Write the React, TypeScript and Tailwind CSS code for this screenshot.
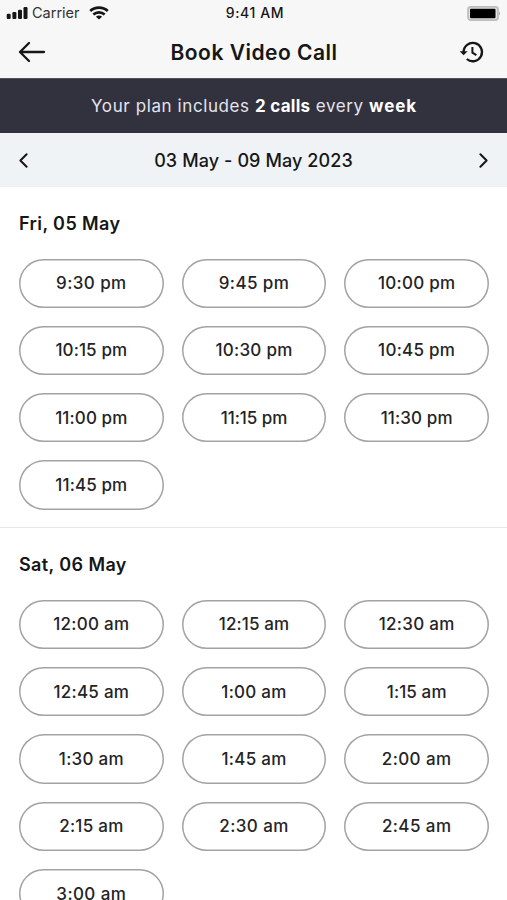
import { ChevronLeft, ChevronRight } from 'lucide-react';

interface Day {
  label: string;
  slots: string[];
}

const DAYS: Day[] = [
  {
    label: 'Fri, 05 May',
    slots: [
      '9:30 pm', '9:45 pm', '10:00 pm',
      '10:15 pm', '10:30 pm', '10:45 pm',
      '11:00 pm', '11:15 pm', '11:30 pm',
      '11:45 pm',
    ],
  },
  {
    label: 'Sat, 06 May',
    slots: [
      '12:00 am', '12:15 am', '12:30 am',
      '12:45 am', '1:00 am', '1:15 am',
      '1:30 am', '1:45 am', '2:00 am',
      '2:15 am', '2:30 am', '2:45 am',
      '3:00 am',
    ],
  },
];

function StatusBar() {
  return (
    <div className="flex h-[26px] items-center relative font-['Inter',sans-serif] text-[#161616]">
      <svg className="ml-[6px]" width="22" height="14" viewBox="0 0 22 14" fill="currentColor">
        <rect x="0.7" y="7.8" width="4" height="5.2" rx="1.2" />
        <rect x="6.4" y="6" width="4" height="7" rx="1.2" />
        <rect x="12" y="3.7" width="4" height="9.3" rx="1.2" />
        <rect x="17.5" y="1" width="4" height="12" rx="1.2" />
      </svg>
      <span className="ml-1 text-[14.5px] leading-none text-[#333]">Carrier</span>
      <svg className="ml-[9px]" width="20" height="15" viewBox="0 0 20 15" fill="none" stroke="currentColor" strokeWidth="2.6">
        <path d="M1.2 5C6 .5 14 .5 18.8 5" />
        <path d="M4.3 8.5C7.5 5.6 12.5 5.6 15.7 8.5" />
        <path d="M10 13.6L6.9 10.7C8.7 9.2 11.3 9.2 13.1 10.7Z" fill="currentColor" stroke="none" />
      </svg>
      <span className="absolute inset-x-0 pl-[3px] text-center text-[14px] font-medium leading-none tracking-[0.6px]">9:41 AM</span>
      <svg className="ml-auto mr-[6px]" width="34" height="15" viewBox="0 0 34 15">
        <rect x="1" y="0.8" width="30" height="13.4" rx="3" fill="#e4e4e4" stroke="#bdbdbd" strokeWidth="1.8" />
        <rect x="3" y="2.8" width="25.5" height="9.4" rx="1" fill="#000" />
        <path d="M32 5.5q2 2 0 4z" fill="#a5a5a5" />
      </svg>
    </div>
  );
}

function HistoryIcon() {
  return (
    <svg width="26" height="24" viewBox="0 0 26 24" fill="none" stroke="#161616" strokeWidth="2.3">
      <path d="M4.6 12a9.2 9.2 0 1 1 3.2 7" />
      <path d="M.6 11.2h8L4.6 15.2z" fill="#161616" stroke="none" />
      <path d="M13.4 7v5.6l4 2.6" strokeWidth="2" />
    </svg>
  );
}

function Slot({ time }: { time: string }) {
  // narrow "1" digits tighten the whole label
  const ones = time.split('1').length - 1;
  return (
    <button
      className="flex h-[49.3px] items-center justify-center rounded-full pt-[1.5px] text-[17px] font-medium text-[#242426] shadow-[inset_0_0_0_1.5px_#a2a3a7]"
      style={{ letterSpacing: `${0.42 - ones * 0.15}px` }}
    >
      {time}
    </button>
  );
}

export default function App() {
  return (
    <div className="h-screen w-full overflow-hidden bg-white font-['Inter',sans-serif] text-[#161616]">
      <header className="h-[79px] border-b border-[#55555b] bg-[#f7f7f7]">
        <StatusBar />
        <div className="flex h-[52px] items-center justify-between pl-[16px] pr-[22px]">
          <svg className="-ml-px" width="32" height="24" viewBox="0 0 32 24" fill="none" stroke="currentColor" strokeWidth="2.3" strokeLinecap="round" strokeLinejoin="round">
            <path d="M14 3L5 12l9 9M5 12h24" />
          </svg>
          <h1 className="pl-0.5 pt-px text-[21px] font-semibold tracking-[0.5px]">Book Video Call</h1>
          <HistoryIcon />
        </div>
      </header>

      <div className="flex h-[54px] items-center justify-center bg-[#32323f] pl-px pt-0.5 text-[17px] tracking-[0.6px] text-[#e4e4ec]">
        <p>
          Your plan includes <b className="font-bold tracking-[0.25px] text-white">2 calls</b> every{' '}
          <b className="font-bold tracking-[0.9px] text-white">week</b>
        </p>
      </div>

      <div className="flex h-[54px] items-center justify-between bg-[#eff3f6] px-[11px] text-[18px] font-medium tracking-[0.1px]">
        <ChevronLeft size={25} strokeWidth={1.9} />
        <span>03 May - 09 May 2023</span>
        <ChevronRight size={25} strokeWidth={1.9} />
      </div>

      {DAYS.map((day) => (
        <section key={day.label} className="border-b border-[#e6e6e8] pb-[17.6px] pl-[19px] pr-[18px] pt-[22px]">
          <h2 className="h-[49.5px] text-[18px] font-semibold leading-[30px] tracking-[0.4px]">{day.label}</h2>
          <div className="grid grid-cols-3 gap-[18px]">
            {day.slots.map((time) => (
              <Slot key={time} time={time} />
            ))}
          </div>
        </section>
      ))}
    </div>
  );
}
